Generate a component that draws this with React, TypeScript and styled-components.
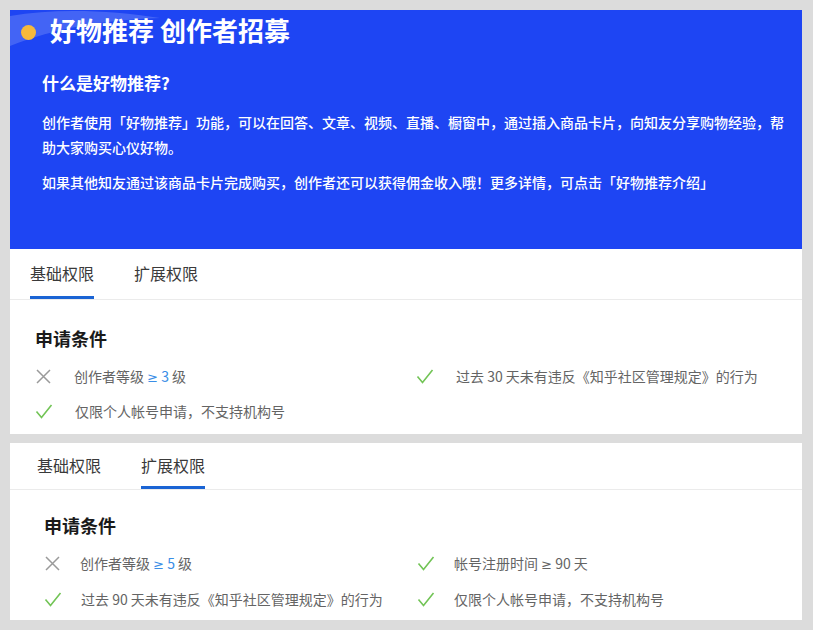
import React from 'react';
import styled, { createGlobalStyle } from 'styled-components';

const GlobalStyle = createGlobalStyle`
    body {
        margin: 0;
        background: #dcdcdc;
        font-family: "Noto Sans CJK SC", "Noto Sans", sans-serif;
    }
`;

const Page = styled.div`
    display: flex;
    flex-direction: column;
    gap: 9px;
    padding: 10px 11px 10px 10px;
`;

const Card = styled.section`
    background: #fff;
    display: flex;
    flex-direction: column;
`;

const Banner = styled.div`
    position: relative;
    overflow: hidden;
    height: 239px;
    background: #1e45f3;
    color: #fff;
    padding: 5px 14px 0 32px;
    box-sizing: border-box;
`;

const Swoosh = styled.svg`
    position: absolute;
    left: 0;
    top: 0;
`;

const BannerTitle = styled.h1`
    position: relative;
    margin: 0 0 0 8px;
    font-size: 26px;
    line-height: 30px;
    font-weight: 700;
    display: flex;
    align-items: center;
`;

const Dot = styled.span`
    position: absolute;
    left: -29px;
    top: 10px;
    width: 15px;
    height: 15px;
    border-radius: 50%;
    background: #f6b93b;
`;

const Question = styled.h2`
    margin: 26px 0 15px;
    font-size: 17px;
    line-height: 24px;
    font-weight: 700;
`;

const Para = styled.p`
    margin: 0 0 10px;
    font-size: 14px;
    line-height: 25px;
    font-weight: 500;
`;

const TabBar = styled.div<{ $pad: number; $h: number }>`
    display: flex;
    gap: 40px;
    height: ${({ $h }) => $h}px;
    padding-left: ${({ $pad }) => $pad}px;
    border-bottom: 1px solid #ebebeb;
`;

const Tab = styled.div<{ $active?: boolean }>`
    position: relative;
    font-size: 16px;
    color: #3a3a3a;
    display: flex;
    align-items: center;
    padding-bottom: 2px;
    &::after {
        content: '';
        position: absolute;
        left: 0;
        right: 0;
        bottom: 0;
        height: 3px;
        background: ${({ $active }) => ($active ? '#1a64d4' : 'transparent')};
    }
`;

const Body = styled.div<{ $pad: number; $top: number; $bottom: number }>`
    padding: ${({ $top }) => $top}px 20px ${({ $bottom }) => $bottom}px ${({ $pad }) => $pad}px;
`;

const SectionTitle = styled.h3`
    margin: 0 0 16px;
    font-size: 18px;
    line-height: 20px;
    font-weight: 700;
    color: #1a1a1a;
`;

const Conditions = styled.div<{ $col: number; $rowGap: number }>`
    display: grid;
    grid-template-columns: ${({ $col }) => $col}px 1fr;
    row-gap: ${({ $rowGap }) => $rowGap}px;
`;

const Item = styled.div<{ $gap: number }>`
    display: flex;
    align-items: center;
    gap: ${({ $gap }) => $gap}px;
    height: 24px;
    font-size: 14px;
    line-height: 24px;
    color: #646464;
    white-space: nowrap;
`;

const Level = styled.span`
    color: #3a8ee6;
`;

const Ge = styled.span`
    font-family: "DejaVu Sans", sans-serif;
    font-size: 13px;
    line-height: 0;
`;

const Cross = () => (
    <svg width="17" height="17" viewBox="0 0 17 17">
        <path d="M2 2 L15 15 M15 2 L2 15" stroke="#9a9a9a" strokeWidth="1.5" fill="none" />
    </svg>
);

const Check = () => (
    <svg width="18" height="17" viewBox="0 0 18 17">
        <path d="M1.5 8.5 L6.5 14.5 L16.5 2" stroke="#72c456" strokeWidth="1.6" fill="none" />
    </svg>
);

interface Cond {
    ok: boolean;
    text: React.ReactNode;
}

const ConditionList: React.FC<{ items: Cond[]; col: number; gap: number; rowGap: number }> = ({ items, col, gap, rowGap }) => (
    <Conditions $col={col} $rowGap={rowGap}>
        {items.map((c, i) => (
            <Item key={i} $gap={gap}>
                {c.ok ? <Check /> : <Cross />}
                <span>{c.text}</span>
            </Item>
        ))}
    </Conditions>
);

const basic: Cond[] = [
    { ok: false, text: <>创作者等级 <Level><Ge>≥</Ge> 3</Level> 级</> },
    { ok: true, text: '过去 30 天未有违反《知乎社区管理规定》的行为' },
    { ok: true, text: '仅限个人帐号申请，不支持机构号' },
];

const extended: Cond[] = [
    { ok: false, text: <>创作者等级 <Level><Ge>≥</Ge> 5</Level> 级</> },
    { ok: true, text: <>帐号注册时间 <Ge>≥</Ge> 90 天</> },
    { ok: true, text: '过去 90 天未有违反《知乎社区管理规定》的行为' },
    { ok: true, text: '仅限个人帐号申请，不支持机构号' },
];

const App: React.FC = () => (
    <>
        <GlobalStyle />
        <Page>
            <Card>
                <Banner>
                    <Swoosh width="180" height="60" viewBox="0 0 180 60">
                        <path d="M0 6 C45 -2 100 0 150 8 C95 10 45 18 0 36 Z" fill="rgba(255,255,255,0.17)" />
                    </Swoosh>
                    <BannerTitle>
                        <Dot />
                        好物推荐 创作者招募
                    </BannerTitle>
                    <Question>什么是好物推荐?</Question>
                    <Para>
                        创作者使用「好物推荐」功能，可以在回答、文章、视频、直播、橱窗中，通过插入商品卡片，向知友分享购物经验，帮助大家购买心仪好物。
                    </Para>
                    <Para>如果其他知友通过该商品卡片完成购买，创作者还可以获得佣金收入哦！更多详情，可点击「好物推荐介绍」</Para>
                </Banner>
                <TabBar $pad={20} $h={50}>
                    <Tab $active>基础权限</Tab>
                    <Tab>扩展权限</Tab>
                </TabBar>
                <Body $pad={25} $top={28} $bottom={11}>
                    <SectionTitle>申请条件</SectionTitle>
                    <ConditionList items={basic} col={381} gap={22} rowGap={11} />
                </Body>
            </Card>
            <Card>
                <TabBar $pad={27} $h={46}>
                    <Tab>基础权限</Tab>
                    <Tab $active>扩展权限</Tab>
                </TabBar>
                <Body $pad={34} $top={25} $bottom={9}>
                    <SectionTitle>申请条件</SectionTitle>
                    <ConditionList items={extended} col={373} gap={19} rowGap={12} />
                </Body>
            </Card>
        </Page>
    </>
);

export default App;
